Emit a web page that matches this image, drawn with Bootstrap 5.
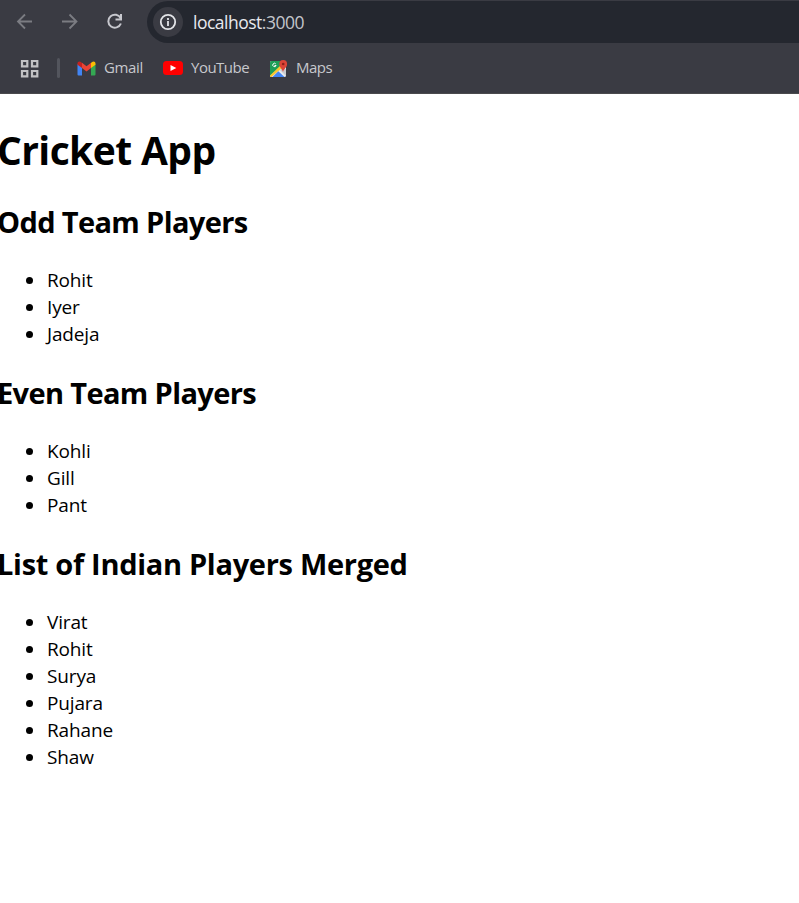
<!DOCTYPE html>
<html lang="en">
<head>
<meta charset="utf-8">
<meta name="viewport" content="width=device-width, initial-scale=1">
<title>Cricket App</title>
<link href="https://cdn.jsdelivr.net/npm/bootstrap@5.3.0/dist/css/bootstrap.min.css" rel="stylesheet">
<style>
body { font-family: "Segoe UI", "Open Sans", "Noto Sans", sans-serif; color: #000; overflow: hidden; }
.chrome { background: #3a3b43; height: 94px; border-bottom: 1px solid #4a4a4d; }
.toolbar { height: 43px; padding: 1px 0 0 15px; }
.toolbar-btn { width: 20px; height: 20px; margin-right: 25px; }
.omnibox { height: 42px; background: #24272f; border-radius: 21px 0 0 21px; padding-left: 6px; margin-left: -3px; }
.site-info { width: 30px; height: 30px; border-radius: 50%; background: #3a3b43; }
.address { font-size: 17.5px; letter-spacing: -.5px; color: #e8e9ee; margin-left: 10px; }
.port { color: #c3c5cb; }
.bookmarks { height: 50px; padding-left: 20px; font-size: 15px; color: #c7c8cd; }
.divider { width: 3px; height: 20px; border-radius: 2px; background: #53555d; margin: 0 17px 0 18px; }
.bm-gmail { width: 86px; } .bm-youtube { width: 106px; }
.bm-label { letter-spacing: -.5px; padding-bottom: 2px; }
.bm-gmail .bm-label { letter-spacing: -.35px; }
.page { margin-left: -3px; padding-top: 29px; }
.page h1 { font-size: 39px; font-weight: 700; line-height: 54px; letter-spacing: -.6px; margin: 0 0 25px; }
.page h2 { font-size: 29px; font-weight: 700; line-height: 40px; letter-spacing: -.63px; margin: 0 0 25px; white-space: nowrap; }
.page h2.merged-title { letter-spacing: -.3px; }
.players { margin: 0 0 25px; padding-left: 29px; font-size: 19px; line-height: 27px; letter-spacing: -.15px; }
.players li::before { content: ""; width: 7px; height: 7px; border-radius: 50%; background: #000; margin-right: 14px; }
</style>
<script src="https://cdn.jsdelivr.net/npm/bootstrap@5.3.0/dist/js/bootstrap.bundle.min.js"></script>
</head>
<body class="bg-white">
<header class="chrome">
  <div class="toolbar d-flex align-items-center">
    <svg class="toolbar-btn flex-shrink-0" viewBox="0 0 20 20" fill="none" stroke="#7b7c82" stroke-width="1.8"><path d="M17 9.500H3M10 2.500l-7 7 7 7"/></svg>
    <svg class="toolbar-btn flex-shrink-0" viewBox="0 0 20 20" fill="none" stroke="#7b7c82" stroke-width="1.8"><path d="M2 9.500h14M9.500 2.500l7 7-7 7"/></svg>
    <svg class="toolbar-btn flex-shrink-0" viewBox="0 0 20 20" fill="none" stroke="#c7c8ce" stroke-width="2"><path d="M15.700 6.400A6.500 6.500 0 1 0 15.900 11.500M16 2v5.500h-5.500"/></svg>
    <div class="omnibox d-flex align-items-center flex-grow-1">
      <span class="site-info d-flex align-items-center justify-content-center">
        <svg width="18" height="18" viewBox="0 0 18 18" fill="none" stroke="#e3e4e8" stroke-width="1.8"><circle cx="9" cy="9" r="7.200"/><path d="M9 8v5M9 5v1.900"/></svg>
      </span>
      <span class="address">localhost<span class="port">:3000</span></span>
    </div>
  </div>
  <nav class="bookmarks d-flex align-items-center">
    <svg width="19" height="19" viewBox="0 0 19 19" fill="none" stroke="#c2c2c4" stroke-width="2.2"><path d="M2 2h5.300v5.300H2zM12 2h5.300v5.300H12zM2 12h5.300v5.300H2zM12 12h5.300v5.300H12z"/></svg>
    <span class="divider"></span>
    <span class="bm-gmail d-flex align-items-center">
      <svg class="me-2" width="19" height="15" viewBox="0 0 19 15"><path fill="#4285f4" d="M.5 3v10.500q0 1 1 1H5V6z"/><path fill="#34a853" d="M14 6v8.500h3.500q1 0 1-1V3z"/><path fill="#fbbc04" d="M14 2v5l4.500-3.300V2.500c0-2-2-2.700-3.500-1.500z"/><path fill="#c5221f" d="M5 2v5L.5 3.700V2.500C.5.500 2.500-.2 4 1z"/><path fill="#ea4335" d="M5 1.800l4.500 3.400L14 1.800V7l-4.500 3.500L5 7z"/></svg>
      <span class="bm-label">Gmail</span>
    </span>
    <span class="bm-youtube d-flex align-items-center">
      <svg class="me-2" width="20" height="14" viewBox="0 0 20 14"><rect width="20" height="14" rx="3.500" fill="#f00"/><path fill="#fff" d="M7.500 4l5.800 3-5.800 3z"/></svg>
      <span class="bm-label">YouTube</span>
    </span>
    <span class="d-flex align-items-center">
      <svg class="me-2" width="19" height="19" viewBox="0 0 19 19"><rect x="1" y="2" width="16" height="16" rx="1.500" fill="#e8eaed"/><path fill="#1e9e57" d="M2.500 2H13v4L1 17V3.500Q1 2 2.500 2z"/><path fill="#fbc72f" d="M1 16.500L11 7l2 2-10.500 9H2q-1 0-1-1.500z"/><path fill="#4285f4" d="M3.500 18L9.300 12.200 15.500 18z"/><path fill="#c8cace" d="M11 11l3-2 3 1v7z"/><path d="M6.700 4.800a1.700 1.700 0 1 0 .4 1.700H5.500" fill="none" stroke="#fff" stroke-width="1"/><path fill="#db4437" d="M14 13c-.4-3-3.700-4.300-3.700-8a3.900 3.900 0 0 1 7.800 0c0 3.700-3.600 5-4.100 8z"/><circle cx="14.200" cy="5" r="1.300" fill="#8c2018"/></svg>
      <span class="bm-label">Maps</span>
    </span>
  </nav>
</header>
<main class="page">
  <h1>Cricket App</h1>
  <h2>Odd Team Players</h2>
  <ul class="players list-unstyled">
    <li class="d-flex align-items-center">Rohit</li>
    <li class="d-flex align-items-center">Iyer</li>
    <li class="d-flex align-items-center">Jadeja</li>
  </ul>
  <h2>Even Team Players</h2>
  <ul class="players list-unstyled">
    <li class="d-flex align-items-center">Kohli</li>
    <li class="d-flex align-items-center">Gill</li>
    <li class="d-flex align-items-center">Pant</li>
  </ul>
  <h2 class="merged-title">List of Indian Players Merged</h2>
  <ul class="players list-unstyled">
    <li class="d-flex align-items-center">Virat</li>
    <li class="d-flex align-items-center">Rohit</li>
    <li class="d-flex align-items-center">Surya</li>
    <li class="d-flex align-items-center">Pujara</li>
    <li class="d-flex align-items-center">Rahane</li>
    <li class="d-flex align-items-center">Shaw</li>
  </ul>
</main>
</body>
</html>
